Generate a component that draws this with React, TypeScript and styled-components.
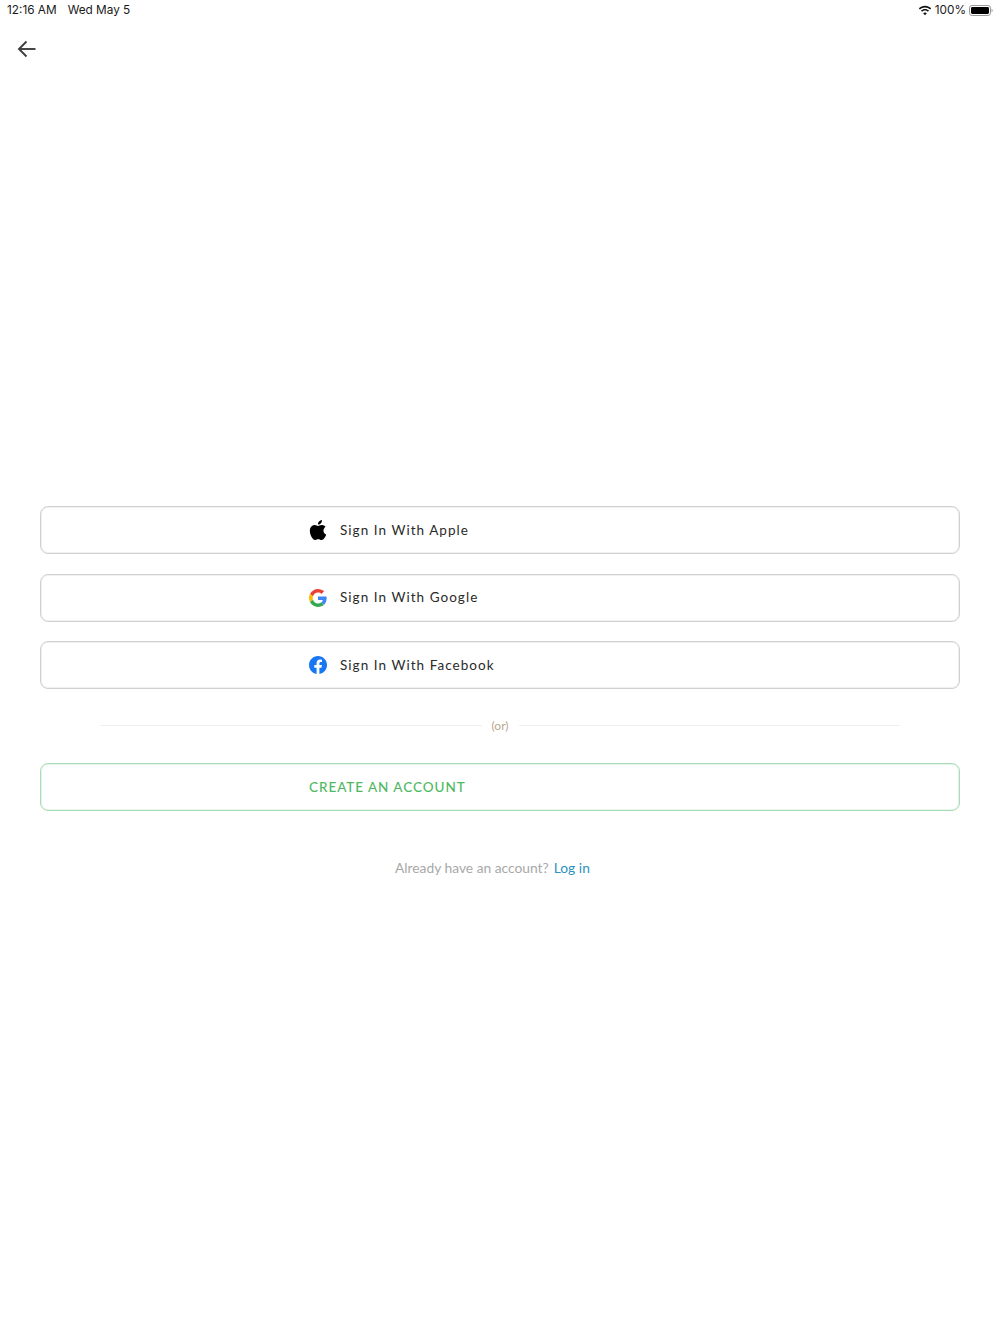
import React from "react";
import styled, { createGlobalStyle } from "styled-components";

const Global = createGlobalStyle`
  html, body { margin: 0; padding: 0; background: #fff; }
  body { font-family: "Inter", "Liberation Sans", sans-serif; }
`;

const Page = styled.div`
  width: 1000px;
  height: 1334px;
  overflow: hidden;
  background: #fff;
  display: flex;
  flex-direction: column;
`;

const StatusBar = styled.div`
  height: 20px;
  padding: 0 7px 0 7px;
  display: flex;
  align-items: center;
  justify-content: space-between;
  font-family: "Inter", "Liberation Sans", sans-serif;
  font-size: 11.8px;
  color: #1a1a1a;
`;

const StatusGroup = styled.div<{ $gap: number }>`
  display: flex;
  align-items: center;
  gap: ${(p) => p.$gap}px;
`;

const BackRow = styled.div`
  height: 58px;
  padding-left: 17px;
  display: flex;
  align-items: flex-start;
  padding-top: 19px;
  box-sizing: border-box;
`;

const Content = styled.div`
  padding: 428px 40px 0;
  display: flex;
  flex-direction: column;
`;

const ButtonStack = styled.div`
  display: flex;
  flex-direction: column;
  gap: 19.5px;
`;

const OutlineButton = styled.button<{ $accent?: boolean }>`
  width: 920px;
  height: 48px;
  box-sizing: border-box;
  padding: 0 0 1px 268px;
  display: flex;
  align-items: center;
  gap: 13.5px;
  background: #fff;
  border: 1px solid ${(p) => (p.$accent ? "#a9dcb4" : "#d0d0d0")};
  box-shadow: inset 0 0 0 1px ${(p) => (p.$accent ? "#e6f5e9" : "#f0f0f0")};
  border-radius: 8px;
  font-family: "Lato", "Liberation Sans", sans-serif;
  font-size: 13.5px;
  font-weight: ${(p) => (p.$accent ? 500 : 400)};
  letter-spacing: ${(p) => (p.$accent ? "0.95px" : "1.05px")};
  color: ${(p) => (p.$accent ? "#4fb962" : "#2a2a2a")};
`;

const IconSlot = styled.span`
  display: flex;
  margin-top: 1px;
  margin-left: -0.5px;
`;

const Divider = styled.div`
  height: 74px;
  padding: 0 60px 2px;
  box-sizing: border-box;
  display: flex;
  align-items: center;
  gap: 10px;
`;

const Rule = styled.div`
  flex: 1;
  height: 1px;
  background: #eeeeee;
`;

const OrLabel = styled.span`
  font-family: "Lato", "Liberation Sans", sans-serif;
  font-size: 12px;
  color: #b8a68e;
`;

const Footer = styled.div`
  margin-top: 47px;
  padding-left: 355px;
  display: flex;
  gap: 5px;
  font-family: "Lato", "Liberation Sans", sans-serif;
  font-size: 13.8px;
  line-height: 19px;
  color: #a8a8a8;
`;

const LogIn = styled.a`
  color: #2a93c2;
`;

const Wifi = () => (
  <svg width="14" height="11" viewBox="0 0 15 11" fill="#111">
    <path d="M7.5 2.2c2.1 0 4 .8 5.5 2.2l1.1-1.2C12.3 1.4 10 .4 7.5.4S2.7 1.4.9 3.2L2 4.4c1.5-1.4 3.4-2.2 5.5-2.2z" />
    <path d="M7.5 5.6c1.2 0 2.3.5 3.1 1.2l1.2-1.2C10.6 4.5 9.1 3.8 7.5 3.8S4.4 4.5 3.2 5.6l1.2 1.2c.8-.7 1.9-1.2 3.1-1.2z" />
    <path d="M7.500 10.600l2-2.100c-.5-.5-1.200-.8-2-.8s-1.500.3-2 .8z" />
  </svg>
);

const Battery = () => (
  <svg width="24" height="11" viewBox="0 0 24 11">
    <rect x="0.5" y="0.5" width="21" height="10" rx="2.6" fill="none" stroke="#999" />
    <rect x="2" y="2" width="18" height="7" rx="1.4" fill="#000" />
    <path d="M22.500 3.700v3.600c.8-.3 1.300-1 1.300-1.800s-.5-1.500-1.300-1.800z" fill="#aaa" />
  </svg>
);

const BackArrow = () => (
  <svg width="20" height="20" viewBox="0 0 20 20" fill="none" stroke="#3d3d3d" strokeWidth="1.9">
    <path d="M18.500 10H2" />
    <path d="M9.500 2.500L2 10l7.500 7.500" />
  </svg>
);

const AppleIcon = () => (
  <svg width="18" height="20" viewBox="0 0 814 1000" fill="#000">
    <path d="M788 341c-6 4-108 62-108 190 0 149 130 201 134 203-1 3-21 72-69 142-43 62-88 123-156 123s-86-39-164-39c-76 0-103 41-165 41s-106-57-156-127C46 791 0 665 0 546c0-192 125-293 247-293 65 0 119 42 160 42 39 0 100-45 174-45 28 0 129 3 207 91zM555 159c31-36 52-87 52-137 0-7-1-14-2-20-50 2-110 33-146 75-28 32-55 83-55 135 0 8 1 16 2 18 3 1 8 1 13 1 45 0 102-30 136-72z" />
  </svg>
);

const GoogleIcon = () => (
  <svg width="18" height="18" viewBox="0 0 48 48">
    <path fill="#EA4335" d="M24 9.500c3.500 0 6.700 1.200 9.200 3.600l6.900-6.900C35.900 2.400 30.500 0 24 0 14.600 0 6.500 5.400 2.600 13.200l8 6.200C12.500 13.700 17.800 9.500 24 9.500z" />
    <path fill="#4285F4" d="M47 24.500c0-1.600-.2-3.100-.4-4.500H24v9h12.900c-.6 3-2.200 5.500-4.700 7.200l7.700 6C44.400 38.100 47 31.900 47 24.500z" />
    <path fill="#FBBC05" d="M10.500 28.600c-.5-1.500-.8-3-.8-4.600s.3-3.100.8-4.600l-8-6.200C.9 16.500 0 20.100 0 24s.9 7.500 2.600 10.800l7.900-6.200z" />
    <path fill="#34A853" d="M24 48c6.500 0 11.900-2.100 15.900-5.800l-7.700-6c-2.200 1.400-4.900 2.300-8.200 2.300-6.200 0-11.500-4.200-13.400-9.900l-8 6.200C6.500 42.600 14.600 48 24 48z" />
  </svg>
);

const FacebookIcon = () => (
  <svg width="18" height="18" viewBox="0 0 24 24">
    <path fill="#1877F2" d="M24 12.070C24 5.400 18.630 0 12 0S0 5.400 0 12.070c0 6.030 4.390 11.020 10.130 11.930v-8.440H7.080v-3.490h3.050V9.410c0-3.020 1.790-4.690 4.530-4.690 1.310 0 2.690.23 2.690.23v2.970h-1.510c-1.490 0-1.960.93-1.960 1.880v2.270h3.330l-.53 3.490h-2.800V24C19.610 23.090 24 18.100 24 12.070z" />
  </svg>
);

export default function App() {
  return (
    <Page>
      <Global />
      <StatusBar>
        <StatusGroup $gap={11}>
          <span>12:16 AM</span>
          <span>Wed May 5</span>
        </StatusGroup>
        <StatusGroup $gap={3}>
          <Wifi />
          <span>100%</span>
          <Battery />
        </StatusGroup>
      </StatusBar>
      <BackRow>
        <BackArrow />
      </BackRow>
      <Content>
        <ButtonStack>
          <OutlineButton>
            <IconSlot><AppleIcon /></IconSlot>
            <span>Sign In With Apple</span>
          </OutlineButton>
          <OutlineButton>
            <IconSlot><GoogleIcon /></IconSlot>
            <span>Sign In With Google</span>
          </OutlineButton>
          <OutlineButton>
            <IconSlot><FacebookIcon /></IconSlot>
            <span>Sign In With Facebook</span>
          </OutlineButton>
        </ButtonStack>
        <Divider>
          <Rule />
          <OrLabel>(or)</OrLabel>
          <Rule />
        </Divider>
        <OutlineButton $accent>
          <span>CREATE AN ACCOUNT</span>
        </OutlineButton>
        <Footer>
          <span>Already have an account?</span>
          <LogIn>Log in</LogIn>
        </Footer>
      </Content>
    </Page>
  );
}
